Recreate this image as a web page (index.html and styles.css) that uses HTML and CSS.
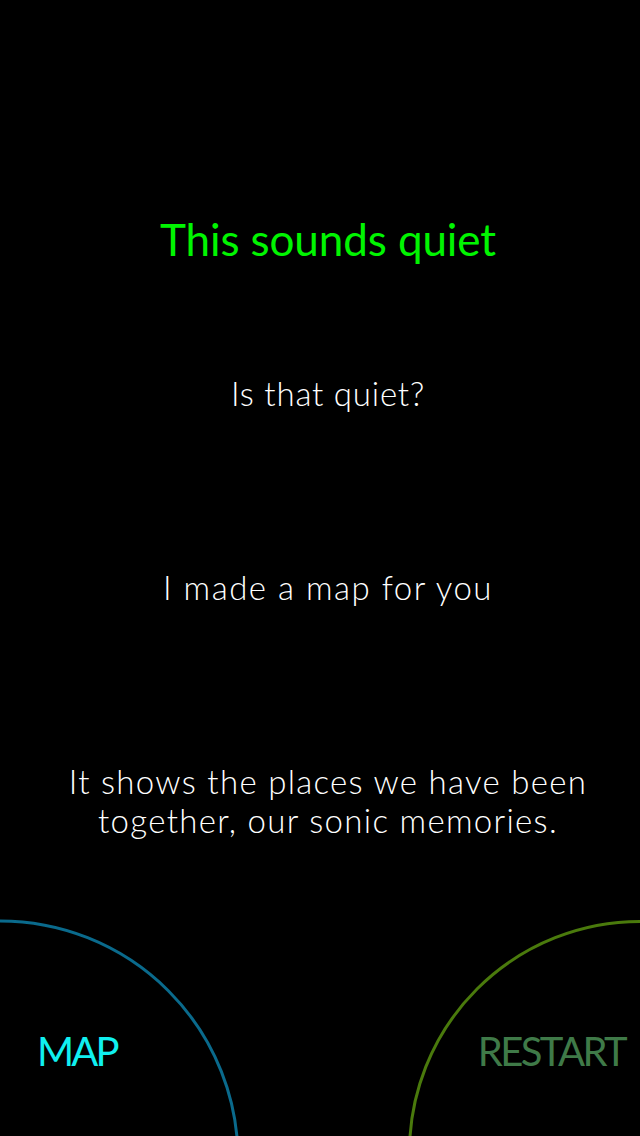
FILE: index.html
```html
<!DOCTYPE html>
<html>
<head>
<meta charset="utf-8">
<link rel="stylesheet" href="styles.css">
</head>
<body>
<div class="screen">
  <div class="content">
    <h1 class="title">This sounds quiet</h1>
    <p class="line line-1">Is that quiet?</p>
    <p class="line line-2">I made a map for you</p>
    <p class="line line-3">It shows the places we have been<br>together, our sonic memories.</p>
  </div>
  <div class="footer">
    <svg class="arc arc-left" width="260" height="236" viewBox="0 0 260 236">
      <circle cx="0" cy="259" r="238" fill="none" stroke="#0a6a8c" stroke-width="3"/>
    </svg>
    <svg class="arc arc-right" width="260" height="236" viewBox="0 0 260 236">
      <circle cx="260" cy="252" r="230.5" fill="none" stroke="#4a7a0c" stroke-width="3"/>
    </svg>
    <span class="btn btn-map">MAP</span>
    <span class="btn btn-restart">RESTART</span>
  </div>
</div>
</body>
</html>
```
FILE: styles.css
```css
html, body {
  margin: 0;
  padding: 0;
  background: #000;
}
.screen {
  position: relative;
  width: 640px;
  height: 1136px;
  overflow: hidden;
  display: flex;
  flex-direction: column;
  font-family: Lato, "DejaVu Sans", sans-serif;
  font-weight: 300;
  color: #fff;
}
.content {
  display: flex;
  flex-direction: column;
  align-items: center;
  padding-left: 16px;
}
.title {
  margin: 213px 0 0;
  font-size: 44px;
  line-height: 52px;
  font-weight: 400;
  color: #00f500;
  letter-spacing: -0.1px;
}
.line {
  margin: 0;
  font-size: 33px;
  line-height: 40px;
  text-align: center;
  letter-spacing: 1.3px;
}
.line-1 { margin-top: 108px; letter-spacing: 0.8px; }
.line-2 { margin-top: 154px; letter-spacing: 1.5px; }
.line-3 { margin-top: 155px; line-height: 39px; }
.footer {
  position: relative;
  margin-top: auto;
  height: 236px;
  display: flex;
  justify-content: space-between;
  align-items: flex-end;
  padding: 0 15px 61px 37px;
  box-sizing: border-box;
}
.arc {
  position: absolute;
  top: 0;
}
.arc-left { left: 0; }
.arc-right { right: 0; }
.btn {
  position: relative;
  font-size: 40px;
  line-height: 48px;
  font-weight: 400;
}
.btn-map { color: #10f0f0; letter-spacing: -2.8px; }
.btn-restart { color: #3f7a48; letter-spacing: -2.6px; }
```
